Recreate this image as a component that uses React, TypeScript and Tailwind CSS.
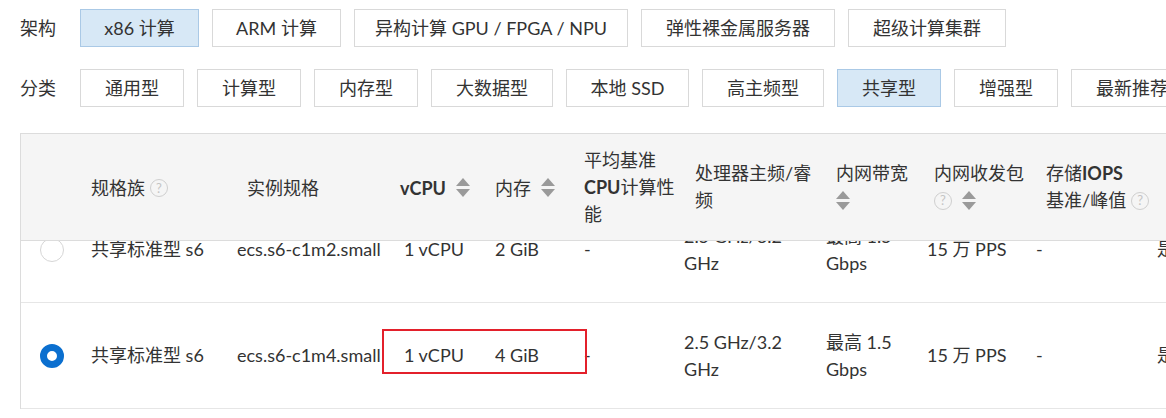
import React from "react";

const FONT = { fontFamily: 'Lato, "Noto Sans CJK SC", sans-serif' };

function Btn({ label, w, active }: { label: string; w: string; active?: boolean }) {
  return (
    <div
      className={`${w} h-[38px] shrink-0 flex items-center justify-center border text-[18px] text-[#333] whitespace-nowrap ${
        active ? "bg-[#d7e8f6] border-[#aac9e6]" : "bg-white border-[#d9d9d9]"
      }`}
    >
      {label}
    </div>
  );
}

function Sort() {
  return (
    <svg width="14" height="22" viewBox="0 0 14 22" className="shrink-0">
      <polygon points="7,1 14,9 0,9" fill="#9a9a9a" />
      <polygon points="0,12 14,12 7,20" fill="#9a9a9a" />
    </svg>
  );
}

function Help() {
  return (
    <span className="inline-flex w-[18px] h-[18px] shrink-0 items-center justify-center rounded-full border-[1.5px] border-[#cfcfcf] text-[13px] leading-none text-[#c4c4c4]">
      ?
    </span>
  );
}

const cols = [
  "w-[60px]",
  "w-[146px]",
  "w-[167px]",
  "w-[91px]",
  "w-[89px]",
  "w-[100px]",
  "w-[142px]",
  "w-[101px]",
  "w-[109px]",
  "w-[121px]",
  "w-[60px]",
];

function Row({
  checked,
  mem,
  inst,
  box,
}: {
  checked?: boolean;
  mem: string;
  inst: string;
  box?: boolean;
}) {
  return (
    <div className="relative flex h-[106px] border-b border-[#e6e6e6] text-[18px] text-[#333] leading-[27px]">
      <div className={`${cols[0]} shrink-0 flex items-center pl-[19px]`}>
        {checked ? (
          <span className="w-[24px] h-[24px] rounded-full border-[7px] border-[#0b6fcf] bg-white" />
        ) : (
          <span className="w-[24px] h-[24px] rounded-full border border-[#d6d6d6] bg-white" />
        )}
      </div>
      <div className={`${cols[1]} shrink-0 flex items-center pl-[10px] whitespace-nowrap`}>共享标准型 s6</div>
      <div className={`${cols[2]} shrink-0 flex items-center pl-[10px] whitespace-nowrap`}>{inst}</div>
      <div className={`${cols[3]} shrink-0 flex items-center pl-[10px] whitespace-nowrap`}>1 vCPU</div>
      <div className={`${cols[4]} shrink-0 flex items-center pl-[10px] whitespace-nowrap`}>{mem}</div>
      <div className={`${cols[5]} shrink-0 flex items-center pl-[10px]`}>-</div>
      <div className={`${cols[6]} shrink-0 flex items-center pl-[10px]`}>
        <div className="whitespace-nowrap">
          2.5 GHz/3.2
          <br />
          GHz
        </div>
      </div>
      <div className={`${cols[7]} shrink-0 flex items-center pl-[10px]`}>
        <div className="whitespace-nowrap">
          最高 1.5
          <br />
          Gbps
        </div>
      </div>
      <div className={`${cols[8]} shrink-0 flex items-center pl-[10px] whitespace-nowrap`}>15 万 PPS</div>
      <div className={`${cols[9]} shrink-0 flex items-center pl-[10px]`}>-</div>
      <div className={`${cols[10]} shrink-0 flex items-center pl-[10px]`}>是</div>
      {box && (
        <div className="absolute left-[361px] top-[26px] w-[205px] h-[45px] border-2 border-[#e3202b]" />
      )}
    </div>
  );
}

export default function App() {
  return (
    <div className="w-[1166px] h-[418px] overflow-hidden bg-white text-[#333]" style={FONT}>
      <div className="flex items-center gap-[13px] pt-[9px] pl-[20px]">
        <div className="w-[47px] shrink-0 text-[18px]">架构</div>
        <Btn label="x86 计算" w="w-[119px]" active />
        <Btn label="ARM 计算" w="w-[129px]" />
        <Btn label="异构计算 GPU / FPGA / NPU" w="w-[274px]" />
        <Btn label="弹性裸金属服务器" w="w-[194px]" />
        <Btn label="超级计算集群" w="w-[158px]" />
      </div>
      <div className="flex items-center gap-[13px] pt-[22px] pl-[20px]">
        <div className="w-[47px] shrink-0 text-[18px]">分类</div>
        <Btn label="通用型" w="w-[104px]" />
        <Btn label="计算型" w="w-[104px]" />
        <Btn label="内存型" w="w-[104px]" />
        <Btn label="大数据型" w="w-[122px]" />
        <Btn label="本地 SSD" w="w-[123px]" />
        <Btn label="高主频型" w="w-[122px]" />
        <Btn label="共享型" w="w-[104px]" active />
        <Btn label="增强型" w="w-[104px]" />
        <Btn label="最新推荐" w="w-[122px]" />
      </div>

      <div className="ml-[20px] mt-[26px] w-[1200px] border-l border-t border-[#dcdcdc]">
        <div className="relative z-10 flex h-[107px] bg-[#f5f5f5] border-b border-[#dcdcdc] text-[18px] leading-[27px] text-[#333]">
          <div className={`${cols[0]} shrink-0`} />
          <div className={`${cols[1]} shrink-0 flex items-center pl-[10px] gap-[5px] pt-[2px]`}>
            <span>规格族</span>
            <Help />
          </div>
          <div className={`${cols[2]} shrink-0 flex items-center pl-[20px] pt-[2px]`}>实例规格</div>
          <div className={`${cols[3]} shrink-0 flex items-center pl-[6px] gap-[10px] pt-[2px]`}>
            <span className="font-bold">vCPU</span>
            <Sort />
          </div>
          <div className={`${cols[4]} shrink-0 flex items-center pl-[10px] gap-[10px] pt-[2px]`}>
            <span>内存</span>
            <Sort />
          </div>
          <div className={`${cols[5]} shrink-0 flex items-center pl-[10px]`}>
            <div className="whitespace-nowrap">
              平均基准
              <br />
              <span className="font-bold">CPU</span>计算性
              <br />
              能
            </div>
          </div>
          <div className={`${cols[6]} shrink-0 flex items-center pl-[21px]`}>
            <div className="whitespace-nowrap">
              处理器主频/睿
              <br />频
            </div>
          </div>
          <div className={`${cols[7]} shrink-0 flex items-center pl-[20px]`}>
            <div>
              <div className="whitespace-nowrap">内网带宽</div>
              <div className="h-[27px] flex items-center">
                <Sort />
              </div>
            </div>
          </div>
          <div className={`${cols[8]} shrink-0 flex items-center pl-[17px]`}>
            <div>
              <div className="whitespace-nowrap">内网收发包</div>
              <div className="h-[27px] flex items-center gap-[10px]">
                <Help />
                <Sort />
              </div>
            </div>
          </div>
          <div className={`${cols[9]} shrink-0 flex items-center pl-[20px]`}>
            <div>
              <div className="whitespace-nowrap">
                存储<span className="font-bold">IOPS</span>
              </div>
              <div className="h-[27px] flex items-center gap-[5px] whitespace-nowrap">
                <span>基准/峰值</span>
                <Help />
              </div>
            </div>
          </div>
          <div className={`${cols[10]} shrink-0`} />
        </div>
        <div className="-mt-[44px]">
          <Row mem="2 GiB" inst="ecs.s6-c1m2.small" />
          <Row checked mem="4 GiB" inst="ecs.s6-c1m4.small" box />
        </div>
      </div>
    </div>
  );
}
